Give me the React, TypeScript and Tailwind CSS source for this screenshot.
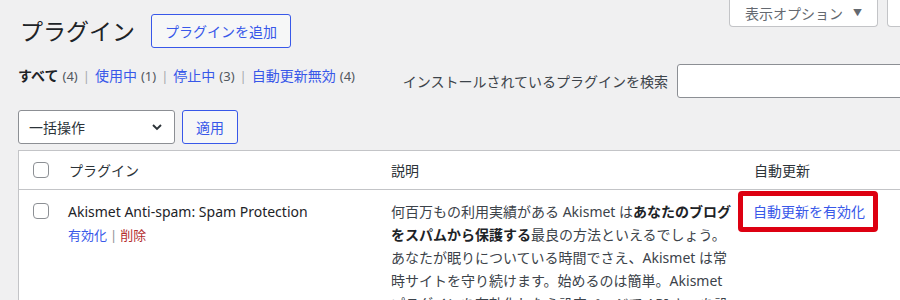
import React from 'react';

const blue = 'text-[#3858e9]';

const Checkbox: React.FC = () => (
  <span className="block w-4 h-4 rounded-[4px] border border-[#8c8f94] bg-white" />
);

const filters = [
  { label: 'すべて', count: 4, current: true },
  { label: '使用中', count: 1 },
  { label: '停止中', count: 3 },
  { label: '自動更新無効', count: 4 },
];

const App: React.FC = () => {
  return (
    <div
      className="w-[900px] h-[300px] overflow-hidden bg-[#f0f0f1] text-[#3c434a]"
      style={{ fontFamily: '"Noto Sans", "Noto Sans CJK JP", sans-serif' }}
    >
      <div className="w-[990px] pl-[18px] pr-[20px]">
        {/* screen meta tabs */}
        <div className="h-[14px] relative">
          <div className="absolute right-[92px] top-0 h-[27px] w-[149px] bg-white border border-t-0 border-[#c3c4c7] rounded-b-[4px] flex items-center justify-center gap-[10px] text-[14px] text-[#646970]">
            <span>表示オプション</span>
            <span className="text-[9px] text-[#646970]">▼</span>
          </div>
          <div className="absolute right-0 top-0 h-[27px] w-[83px] bg-white border border-t-0 border-[#c3c4c7] rounded-b-[4px]" />
        </div>

        {/* title */}
        <div className="flex items-center gap-[16px] h-[34px]">
          <h1 className="text-[23px] leading-[34px] text-[#1d2327] font-normal pl-[2px]">プラグイン</h1>
          <button className={`h-[34px] px-[13px] border border-[#3858e9] rounded-[3px] bg-[#f6f7f7] text-[14px] ${blue}`}>
            プラグインを追加
          </button>
        </div>

        {/* filters + search */}
        <div className="flex items-center mt-[16px] h-[34px]">
          <ul className="flex items-center text-[13px] text-[#646970] leading-[20px] -mt-[11px]">
            {filters.map((f, i) => (
              <li key={f.label} className="flex items-center">
                {f.current ? (
                  <span className="font-bold text-[#1d2327] text-[14px]">{f.label}</span>
                ) : (
                  <span className={`${blue} text-[14px]`}>{f.label}</span>
                )}
                <span className="ml-[4px] text-[#50575e]">({f.count})</span>
                {i < filters.length - 1 && <span className="mx-[5px] text-[#a7aaad]">|</span>}
              </li>
            ))}
          </ul>
          <div className="ml-auto flex items-center gap-[9px]">
            <span className="text-[14px] text-[#3c434a] pt-[1px]">インストールされているプラグインを検索</span>
            <div className="w-[293px] h-[34px] bg-white border border-[#8c8f94] rounded-[3px]" />
          </div>
        </div>

        {/* bulk actions */}
        <div className="flex items-center gap-[7px] mt-[12px] h-[34px]">
          <div className="w-[157px] h-[34px] bg-white border border-[#8c8f94] rounded-[3px] flex items-center justify-between pl-[10px] pr-[9px] text-[14px] text-[#2c3338]">
            <span>一括操作</span>
            <svg width="16" height="16" viewBox="0 0 20 20" fill="none" stroke="#2c3338" strokeWidth="2.4">
              <path d="M5 7.5l5 5 5-5" />
            </svg>
          </div>
          <button className={`h-[34px] w-[56px] border border-[#3858e9] rounded-[3px] bg-[#f6f7f7] text-[14px] ${blue}`}>
            適用
          </button>
        </div>

        {/* table */}
        <div className="mt-[6px] bg-white border border-[#c3c4c7] text-[14px]">
          <div className="grid grid-cols-[40px_322px_363px_1fr] h-[39px] items-center border-b border-[#c3c4c7] text-[#2c3338]">
            <div className="pl-[14px]"><Checkbox /></div>
            <div className="pl-[10px]">プラグイン</div>
            <div className="pl-[10px]">説明</div>
            <div className="pl-[10px]">自動更新</div>
          </div>
          <div className="grid grid-cols-[40px_322px_363px_1fr] leading-[23px]">
            <div className="pl-[14px] pt-[13px]"><Checkbox /></div>
            <div className="pl-[9px] pt-[10px]">
              <div className="text-[#1d2327]">Akismet Anti-spam: Spam Protection</div>
              <div className="text-[13px] mt-[1px]">
                <span className={blue}>有効化</span>
                <span className="mx-[3px] text-[#8c8f94]">|</span>
                <span className="text-[#b32d2e]">削除</span>
              </div>
            </div>
            <div className="pl-[10px] pr-[11px] pt-[10px] text-[#3c434a]">
              何百万もの利用実績がある Akismet は<strong className="font-bold text-[#1d2327]">あなたのブログをスパムから保護する</strong>最良の方法といえるでしょう。あなたが眠りについている時間でさえ、Akismet は常時サイトを守り続けます。始めるのは簡単。Akismet プラグインを有効化したら設定ページで API キーを設定してください。
            </div>
            <div className="pl-[9px] pt-[10px]">
              <div className="relative inline-block">
                <span className={blue}>自動更新を有効化</span>
                <span className="absolute -left-[15px] -top-[9px] w-[140px] h-[41px] border-[5px] border-[#dd0011] rounded-[4px]" />
              </div>
            </div>
          </div>
        </div>
      </div>
    </div>
  );
};

export default App;
